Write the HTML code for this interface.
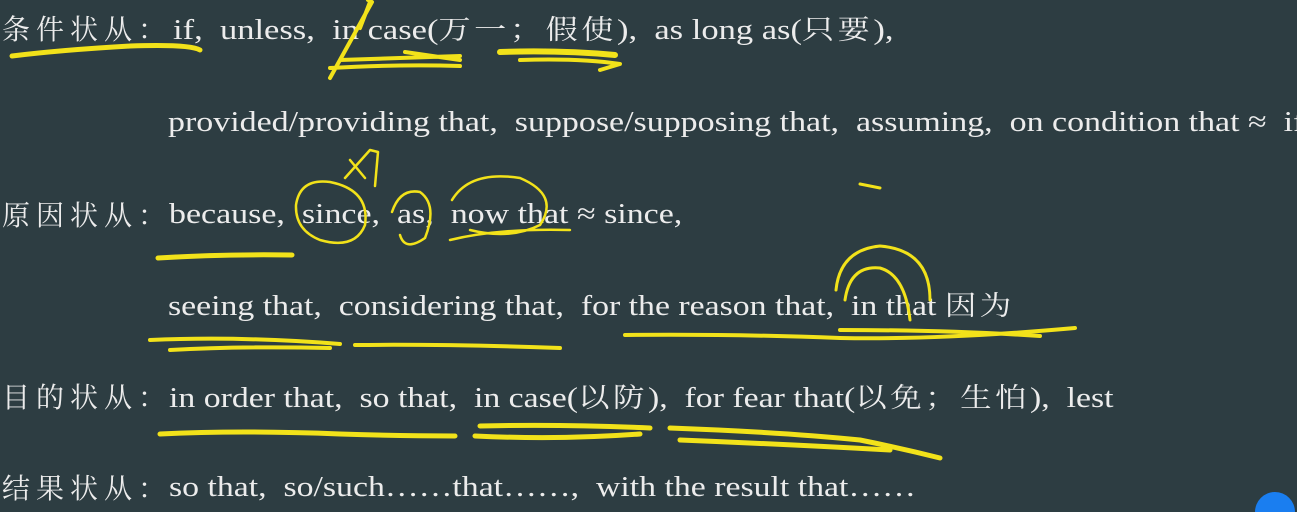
<!DOCTYPE html>
<html><head><meta charset="utf-8"><style>
html,body{margin:0;padding:0;width:1297px;height:512px;overflow:hidden;}
body{background:#2d3d42;position:relative;font-family:"Liberation Serif","Noto Serif CJK SC",serif;color:#ececec;}
.r{position:absolute;font-size:29px;white-space:nowrap;line-height:1;transform-origin:0 0;transform:scaleX(1.17);}
.lb{position:absolute;left:2px;font-family:"Noto Serif CJK SC","Noto Sans CJK SC",serif;font-size:28px;letter-spacing:6px;white-space:nowrap;line-height:1;}
.cn{font-family:"Noto Serif CJK SC","Noto Sans CJK SC",serif;font-size:27px;letter-spacing:3px;}
svg{position:absolute;left:0;top:0;}
</style></head><body>
<div class="lb" style="top:14px">条件状从：</div>
<div class="r" style="left:173px;top:14px;transform:scaleX(1.19)">if,&nbsp; unless,&nbsp; in case(<span class="cn">万一；假使</span>),&nbsp; as long as(<span class="cn">只要</span>),</div>
<div class="r" style="left:168px;top:108px">provided/providing that,&nbsp; suppose/supposing that,&nbsp; assuming,&nbsp; on condition that ≈&nbsp; if</div>
<div class="lb" style="top:200px">原因状从：</div>
<div class="r" style="left:169px;top:200px">because,&nbsp; since,&nbsp; as,&nbsp; now that ≈ since,</div>
<div class="r" style="left:168px;top:290px;transform:scaleX(1.165)">seeing that,&nbsp; considering that,&nbsp; for the reason that,&nbsp; in that <span class="cn">因为</span></div>
<div class="lb" style="top:382px">目的状从：</div>
<div class="r" style="left:169px;top:382px;transform:scaleX(1.165)">in order that,&nbsp; so that,&nbsp; in case(<span class="cn">以防</span>),&nbsp; for fear that(<span class="cn">以免；生怕</span>),&nbsp; lest</div>
<div class="lb" style="top:473px">结果状从：</div>
<div class="r" style="left:169px;top:473px;transform:scaleX(1.165)">so that,&nbsp; so/such……that……,&nbsp; with the result that……</div>
<svg width="1297" height="512" fill="none" stroke="#f2e21a" stroke-linecap="round" stroke-linejoin="round">
<path d="M12 56 Q60 50 130 46 Q190 44 200 50" stroke-width="5"/>
<path d="M330 78 L372 2 L368 0 M370 2 L360 28 M340 60 Q400 58 460 56 M330 68 Q400 64 460 66 M405 52 L460 60 M520 60 Q580 58 620 64 L600 70" stroke-width="4"/>
<path d="M500 52 Q560 50 615 55" stroke-width="6"/>
<path d="M345 178 L370 150 L378 152 L375 186 M350 160 L365 178 M296 205 Q300 178 330 182 Q370 190 365 225 Q355 250 320 240 Q295 230 296 205 M392 212 Q400 188 420 192 Q438 205 425 238 Q405 252 400 235 M452 200 Q470 170 520 178 Q560 195 540 225 Q510 240 470 230 M450 240 Q500 228 570 230" stroke-width="2.5"/>
<path d="M860 184 L880 188" stroke-width="3"/>
<path d="M158 258 Q220 254 292 255" stroke-width="5"/>
<path d="M836 290 Q840 250 880 246 Q930 250 930 300 M845 300 Q850 265 880 268 Q905 275 910 320" stroke-width="3"/>
<path d="M150 340 Q240 336 340 344 M170 350 Q240 346 330 348 M355 345 Q450 344 560 348 M625 335 Q740 334 840 338 Q940 340 1075 328 M840 330 Q950 330 1040 336" stroke-width="4"/>
<path d="M160 434 Q240 430 340 434 Q400 436 455 436 M480 426 Q560 424 650 428 M475 436 Q560 440 640 434 M670 428 Q780 432 860 440 Q900 448 940 458 M680 440 Q780 444 890 450" stroke-width="5"/>
<path d="M1255 512 A20 20 0 0 1 1295 512 Z" fill="#1a7ef0" stroke="none"/>
</svg>
</body></html>
